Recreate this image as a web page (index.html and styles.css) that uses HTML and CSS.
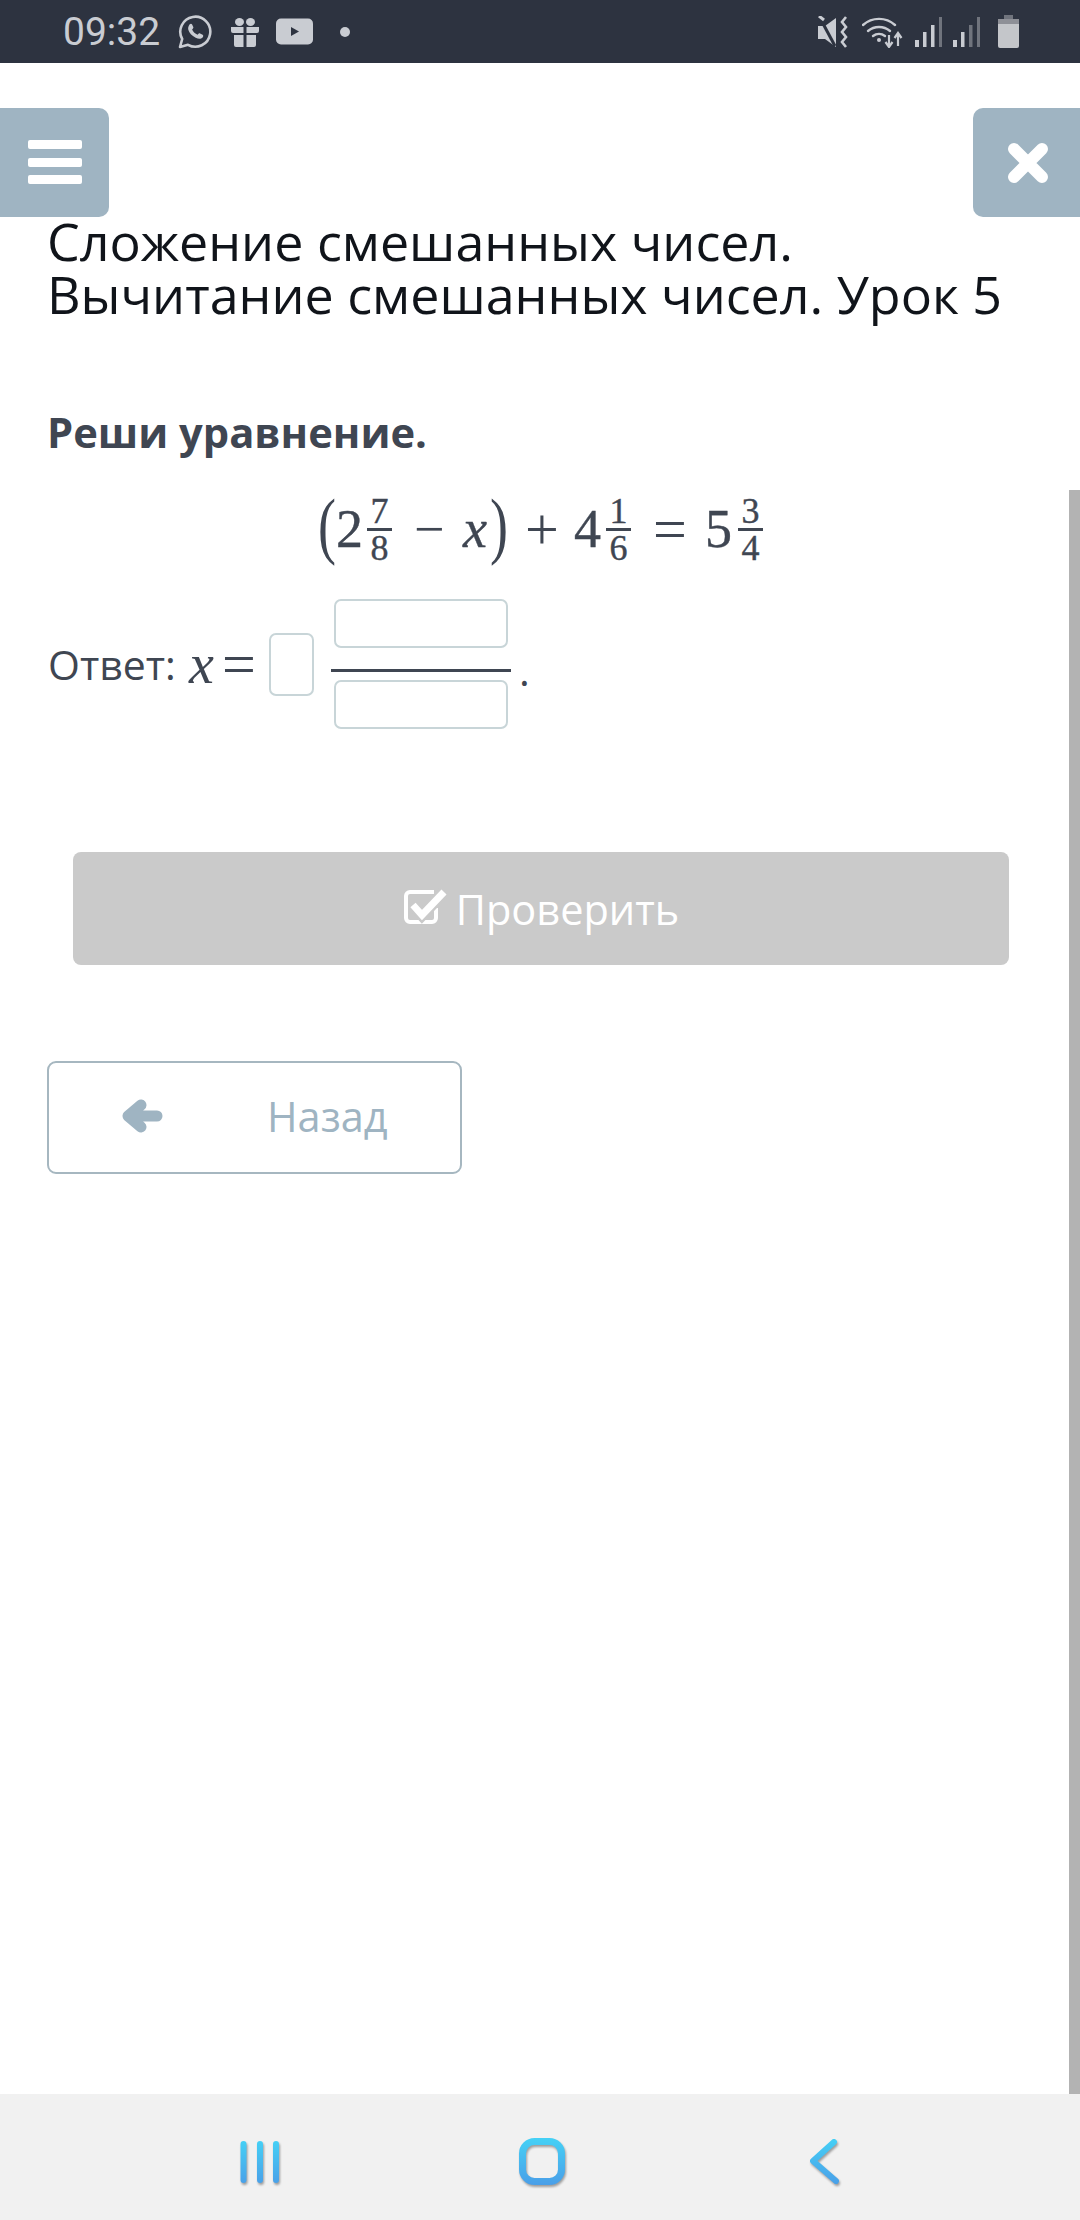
FILE: index.html
```html
<!DOCTYPE html>
<html lang="ru">
<head>
<meta charset="utf-8">
<title>Урок 5</title>
<link rel="stylesheet" href="styles.css">
</head>
<body>
<div class="page">
  <header class="status">
    <div class="status-left">
      <span class="time">09:32</span>
      <svg class="ic-wa" viewBox="0 0 34 34"><path d="M2 32l2.200-8A15 15 0 1 1 10 29.800z" fill="none" stroke="#c9ccd2" stroke-width="2.600" stroke-linejoin="round"/><path d="M11.500 9.500c1-1 2-1 2.600 0l1.200 2.500c.3.700 0 1.200-1.200 2.500 1.200 2.400 3 4.200 5.500 5.300 1.300-1.400 1.800-1.700 2.500-1.300l2.500 1.300c.9.600.8 1.700 0 2.600-1.600 1.800-4 1.800-6.900.4-4-2-6.500-4.800-7.400-8-.5-2 .2-3.600 1.200-5.300z" fill="#c9ccd2"/></svg>
      <svg class="ic-gift" viewBox="0 0 28 30"><path d="M0 10h12.500v6H2a2 2 0 0 1-2-2zM15.500 10H28v4a2 2 0 0 1-2 2H15.500zM3 18h9.500v12H5a2 2 0 0 1-2-2zM15.500 18H25v10a2 2 0 0 1-2 2h-7.500z" fill="#c9ccd2"/><ellipse cx="8.500" cy="5" rx="4.500" ry="4" fill="#c9ccd2"/><ellipse cx="19.500" cy="5" rx="4.500" ry="4" fill="#c9ccd2"/></svg>
      <svg class="ic-yt" viewBox="0 0 37 27"><rect width="37" height="26" y=".5" rx="5" fill="#c9ccd2"/><path d="M15 9l8 4.500-8 4.500z" fill="#2d3340"/></svg>
      <span class="dot"></span>
    </div>
    <div class="status-right">
      <svg class="ic-mute" viewBox="0 0 31 32"><path d="M0 10h7l11-8v29L7 23H0z" fill="#c9ccd2"/><path d="M2 2l15 28" stroke="#2d3340" stroke-width="3"/><path d="M1 0l5 4" stroke="#c9ccd2" stroke-width="3"/><path d="M28 1l-4 5 4 5-4 5 4 5-4 5 4 5" fill="none" stroke="#c9ccd2" stroke-width="2.600"/></svg>
      <svg class="ic-wifi" viewBox="0 0 42 32"><g fill="none" stroke="#c9ccd2" stroke-width="2.400" stroke-linecap="round"><path d="M1 9a24 24 0 0 1 32 0"/><path d="M6 15a17 17 0 0 1 22 0"/><path d="M11 20a10 10 0 0 1 12 0"/></g><circle cx="17" cy="24" r="2" fill="#c9ccd2"/><path d="M27 19v11M23.500 26l3.500 5 3.500-5M36 30V18M32.500 22l3.500-5 3.500 5" fill="none" stroke="#c9ccd2" stroke-width="2.200"/></svg>
      <svg class="ic-sig" viewBox="0 0 27 32"><rect x="0" y="24" width="4" height="7" fill="#c9ccd2"/><rect x="8" y="16" width="3.500" height="15" fill="#c9ccd2"/><rect x="16" y="9" width="3.500" height="22" fill="#c9ccd2"/><rect x="24" y="1" width="3" height="30" fill="#70747d"/></svg>
      <svg class="ic-sig" viewBox="0 0 27 32"><rect x="0" y="24" width="4" height="7" fill="#c9ccd2"/><rect x="8" y="16" width="3.500" height="15" fill="#c9ccd2"/><rect x="16" y="9" width="3.500" height="22" fill="#70747d"/><rect x="24" y="1" width="3" height="30" fill="#70747d"/></svg>
      <svg class="ic-bat" viewBox="0 0 21 33"><rect x="6" y="0" width="9" height="5" fill="#70747d"/><rect x="0" y="4" width="21" height="6" fill="#8e9097"/><path d="M0 9h21v22a2 2 0 0 1-2 2H2a2 2 0 0 1-2-2z" fill="#c4c6ca"/></svg>
    </div>
  </header>

  <main class="content">
    <div class="topbar">
      <button class="tbtn tbtn-left"><svg class="ic-menu" viewBox="0 0 54 44"><rect width="54" height="9" rx="2" fill="#fff"/><rect y="18" width="54" height="9" rx="2" fill="#fff"/><rect y="35" width="54" height="9" rx="2" fill="#fff"/></svg></button>
      <button class="tbtn tbtn-right"><svg class="ic-x" viewBox="0 0 42 42"><path d="M7 7l28 28M35 7L7 35" stroke="#fff" stroke-width="12" stroke-linecap="round"/></svg></button>
    </div>

    <h1 class="title">Сложение смешанных чисел.<br>Вычитание смешанных чисел. Урок 5</h1>

    <p class="task">Реши уравнение.</p>

    <div class="equation">
      <span class="paren">(</span><span class="num">2</span>
      <span class="frac frac-a"><span>7</span><span class="bar"></span><span>8</span></span>
      <span class="op op-minus">−</span><i class="var">x</i><span class="paren paren-close">)</span>
      <span class="op op-plus">+</span><span class="num num-b">4</span>
      <span class="frac frac-b"><span>1</span><span class="bar"></span><span>6</span></span>
      <span class="op op-eq">=</span><span class="num num-c">5</span>
      <span class="frac frac-c"><span>3</span><span class="bar"></span><span>4</span></span>
    </div>

    <div class="answer">
      <span class="answer-label">Ответ:</span>
      <i class="var answer-x">x</i>
      <span class="op answer-eq">=</span>
      <span class="box box-whole"></span>
      <span class="answer-frac">
        <span class="box box-part"></span>
        <span class="answer-bar"></span>
        <span class="box box-part"></span>
      </span>
      <span class="answer-dot">.</span>
    </div>

    <button class="check">
      <svg class="ic-check" viewBox="0 0 44 38"><path d="M33 21v10a4 4 0 0 1-4 4H7a4 4 0 0 1-4-4V9a4 4 0 0 1 4-4h24" fill="none" stroke="#fff" stroke-width="4"/><path d="M10 18l9 10L41 5" fill="none" stroke="#cacaca" stroke-width="12"/><path d="M10 18l9 10L41 5" fill="none" stroke="#fff" stroke-width="7"/></svg>
      <span>Проверить</span>
    </button>

    <button class="back">
      <svg class="ic-arrow" viewBox="0 0 41 34"><path d="M19 6L6 17l13 11M6 17h29" fill="none" stroke="#9fb4c2" stroke-width="11" stroke-linecap="round" stroke-linejoin="round"/></svg>
      <span>Назад</span>
    </button>
  </main>

  <div class="scrollbar"></div>

  <nav class="navbar">
    <svg class="nav-ic nav-recent" viewBox="0 0 42 48"><g stroke="url(#g1)" stroke-width="6" stroke-linecap="round"><path d="M4.500 5v36M21 5v36M37 5v36"/></g><defs><linearGradient id="g1" gradientUnits="userSpaceOnUse" x1="0" y1="0" x2="0" y2="46"><stop offset="0" stop-color="#45d2f6"/><stop offset="1" stop-color="#4a9fe8"/></linearGradient></defs></svg>
    <svg class="nav-ic nav-home" viewBox="0 0 50 52"><rect x="4.500" y="4.500" width="39" height="40" rx="12" fill="none" stroke="url(#g2)" stroke-width="7"/><defs><linearGradient id="g2" gradientUnits="userSpaceOnUse" x1="0" y1="0" x2="0" y2="48"><stop offset="0" stop-color="#45d2f6"/><stop offset="1" stop-color="#4a9fe8"/></linearGradient></defs></svg>
    <svg class="nav-ic nav-back" viewBox="0 0 34 50"><path d="M26 5L5 24l23 20" fill="none" stroke="url(#g3)" stroke-width="6" stroke-linecap="round" stroke-linejoin="round"/><defs><linearGradient id="g3" gradientUnits="userSpaceOnUse" x1="0" y1="0" x2="0" y2="48"><stop offset="0" stop-color="#45d2f6"/><stop offset="1" stop-color="#4a9fe8"/></linearGradient></defs></svg>
  </nav>
</div>
</body>
</html>
```

FILE: styles.css
```css
* { box-sizing: border-box; }
html, body { margin: 0; padding: 0; }
body { width: 1080px; height: 2220px; background: #fff; overflow: hidden; }
button { font: inherit; padding: 0; margin: 0; }

.page {
  position: relative;
  width: 1080px;
  height: 2220px;
  display: flex;
  flex-direction: column;
  font-family: "Open Sans", "Noto Sans", sans-serif;
  color: #3f4652;
}

/* status bar */
.status {
  height: 63px;
  flex: none;
  background: #2d3340;
  display: flex;
  justify-content: space-between;
  align-items: center;
  padding: 0 61px 0 63px;
}
.status-left, .status-right { display: flex; align-items: center; }
.time { font: 400 39px/1 Roboto, sans-serif; color: #c9ccd2; width: 115px; margin-top: 2px; }
.ic-wa { width: 34px; height: 34px; }
.ic-gift { width: 28px; height: 30px; margin-left: 19px; }
.ic-yt { width: 37px; height: 27px; margin-left: 17px; }
.dot { width: 10px; height: 10px; border-radius: 50%; background: #c9ccd2; margin-left: 27px; }
.ic-mute { width: 31px; height: 32px; }
.ic-wifi { width: 42px; height: 32px; margin-left: 13px; }
.ic-sig { width: 27px; height: 32px; margin-left: 11px; }
.ic-bat { width: 21px; height: 33px; margin-left: 18px; }

/* content */
.content { flex: 1; display: flex; flex-direction: column; align-items: flex-start; }
.topbar { width: 100%; display: flex; justify-content: space-between; margin-top: 45px; }
.tbtn {
  height: 109px;
  background: #9fb4c2;
  border: 0;
  display: flex;
  align-items: center;
  justify-content: center;
}
.tbtn-left { width: 109px; border-radius: 0 10px 10px 0; }
.tbtn-right { width: 107px; border-radius: 10px 0 0 10px; padding-left: 3px; }
.ic-menu { width: 54px; height: 44px; margin-top: -2px; }
.ic-x { width: 42px; height: 42px; }

.title {
  margin: -3px 0 0;
  padding-left: 47px;
  font-weight: 400;
  font-size: 52px;
  line-height: 53px;
  color: #10141a;
  white-space: nowrap;
}
.task {
  margin: 86px 0 0 47px;
  font-size: 41.700px;
  line-height: 52px;
  font-weight: 700;
}

/* equation */
.equation {
  width: 100%;
  height: 76px;
  margin-top: 33px;
  display: flex;
  align-items: center;
  padding-left: 318px;
  font-family: "Liberation Serif", serif;
  line-height: 1;
  -webkit-text-stroke: 0.4px #3f4652;
}
.paren { font-size: 54px; line-height: 54px; width: 18px; margin-top: -6px; text-align: center; transform: scaleY(1.36); -webkit-text-stroke: 0; }
.paren-close { margin-left: 3px; }
.num { font-size: 54px; width: 25px; text-align: center; }
.num-b { margin-left: 15px; }
.num-c { margin-left: 18px; }
.frac {
  display: flex;
  flex-direction: column;
  align-items: center;
  width: 25px;
  font-size: 36px;
  line-height: 34px;
}
.frac-a { margin-left: 6px; }
.frac-b { margin-left: 7px; }
.frac-c { margin-left: 8px; }
.bar { width: 100%; height: 3px; background: #3f4652; }
.op { font-family: "Liberation Serif", serif; text-align: center; -webkit-text-stroke: 0; }
.op-minus { font-size: 54px; margin-left: 22px; width: 30px; }
.var { font-family: "Liberation Serif", serif; font-style: italic; }
.equation .var { font-size: 54px; margin-left: 19px; width: 24px; }
.op-plus { font-size: 60px; margin-left: 17px; width: 34px; }
.op-eq { font-size: 60px; margin-left: 22px; width: 34px; }

/* answer */
.answer {
  margin: 32px 0 0 48px;
  height: 130px;
  display: flex;
  align-items: center;
}
.answer-label { font-size: 41px; width: 141px; }
.answer-x { font-size: 56px; width: 25px; }
.answer-eq { font-size: 60px; width: 34px; margin-left: 8px; }
.box { display: block; border: 2px solid #c8d5d8; border-radius: 7px; background: #fff; }
.box-whole { width: 45px; height: 63px; margin-left: 13px; }
.answer-frac { display: flex; flex-direction: column; align-items: center; width: 180px; margin-left: 17px; }
.box-part { width: 174px; height: 49px; }
.answer-bar { width: 100%; height: 3px; background: #3f4652; margin: 21px 0 8px; }
.answer-dot { font-size: 41px; margin: 12px 0 0 8px; }

/* buttons */
.check {
  margin: 123px 0 0 73px;
  width: 936px;
  height: 113px;
  background: #cacaca;
  border: 0;
  border-radius: 8px;
  color: #fff;
  font-family: "Open Sans", sans-serif;
  font-size: 41.500px;
  display: flex;
  align-items: center;
  justify-content: center;
  gap: 9px;
}
.ic-check { width: 44px; height: 38px; margin-top: -6px; }

.back {
  margin: 96px 0 0 47px;
  width: 415px;
  height: 113px;
  background: #fff;
  border: 2px solid #a6b7c0;
  border-radius: 9px;
  color: #9fb4c2;
  font-family: "Open Sans", sans-serif;
  font-size: 41.500px;
  display: flex;
  align-items: center;
  padding: 0 0 3px 73px;
}
.ic-arrow { width: 41px; height: 34px; margin-top: -1px; }
.back span { margin-left: 104px; }

.scrollbar {
  position: absolute;
  right: 0;
  top: 490px;
  width: 11px;
  height: 1604px;
  background: #b3b3b3;
}

/* nav */
.navbar {
  flex: none;
  height: 126px;
  background: #f1f1f1;
  display: flex;
  align-items: flex-start;
  padding: 43px 0 0 239px;
}
.nav-ic { filter: drop-shadow(1px 2px 1px rgba(0,0,0,.35)); }
.nav-recent { width: 42px; height: 48px; margin-top: 2px; }
.nav-home { width: 50px; height: 52px; margin-left: 237px; }
.nav-back { width: 34px; height: 50px; margin-left: 240px; }
```
